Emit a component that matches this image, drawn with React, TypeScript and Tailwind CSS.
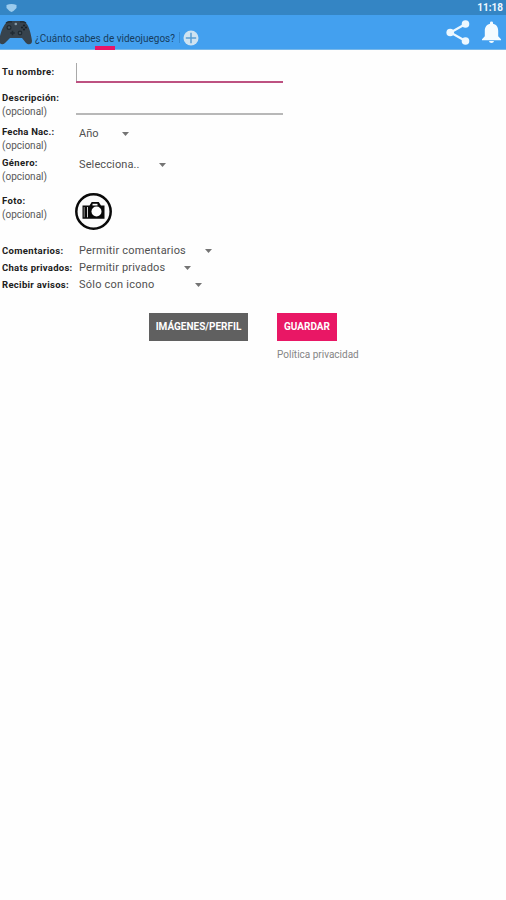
import React from "react";

function Label({ text, optional = false, tracking = "tracking-[0.2px]" }: { text: string; optional?: boolean; tracking?: string }) {
  return (
    <div className="w-[76px] shrink-0 pl-[2px] text-[9.5px] leading-[14px] whitespace-nowrap">
      <div className={`font-bold text-[#202020] ${tracking}`}>{text}</div>
      {optional && <div className="text-[10px] text-[#585858]">(opcional)</div>}
    </div>
  );
}

function Spinner({ text, width, tracking = "" }: { text: string; width: string; tracking?: string }) {
  return (
    <div className={`flex h-[17px] items-center justify-between pl-[3px] text-[11px] leading-[17px] whitespace-nowrap text-[#505050] ${width}`}>
      <span className={tracking}>{text}</span>
      <svg className="h-[4px] w-[7px]" viewBox="0 0 7 4">
        <path d="M0 0h7L3.5 4z" fill="#747474" />
      </svg>
    </div>
  );
}

function Gamepad() {
  return (
    <svg className="h-[26px] w-[33px] shrink-0" viewBox="0 0 33 26">
      <path d="M6 3q2-2 5-2h10q3 0 5 2c3 3 5 11 6 18 0 4-4 4-6 2l-4-5H10l-5 5C3 25 0 25-1 21 0 14 3 6 6 3Z" fill="#37434d" />
      <path d="M6 3q3-2 6-1M20 2q3-1 6 1" fill="none" stroke="#222d35" strokeWidth="1.5" />
      <circle cx="9" cy="7.5" r="2.5" fill="#202b33" />
      <circle cx="9" cy="7.5" r="1.2" fill="#4a5862" />
      <circle cx="20" cy="13" r="2.4" fill="#202b33" />
      <circle cx="20" cy="13" r="1.1" fill="#4a5862" />
      <path d="M12.5 10.7v4.6M10.2 13h4.6" stroke="#202b33" strokeWidth="1.6" />
      <circle cx="15.8" cy="4" r="1.3" fill="#8599a5" />
      <g fill="#182128">
        <circle cx="24" cy="5.5" r="1.1" />
        <circle cx="22" cy="7.5" r="1.1" />
        <circle cx="26" cy="7.5" r="1.1" />
        <circle cx="24" cy="9.5" r="1.1" />
      </g>
    </svg>
  );
}

function CameraButton() {
  return (
    <svg className="h-[38px] w-[38px]" viewBox="0 0 38 38">
      <circle cx="18.5" cy="18.5" r="17.2" fill="#fbfbfb" stroke="#090909" strokeWidth="2.5" />
      <path d="M7.5 12.5h7l2.2-3.5h7l2.3 3.5h3.5v13.3h-22z" fill="#090909" />
      <path d="M17.5 10.8h5v1.7h-5z" fill="#fff" />
      <circle cx="21.5" cy="18.5" r="5" fill="#fff" />
      <path d="M9.2 14v10.3" stroke="#909090" strokeWidth="1" />
      <path d="M12.5 14v10.3" stroke="#d5d5d5" strokeWidth="1" />
    </svg>
  );
}

export default function App() {
  return (
    <div className="flex h-[900px] w-[506px] flex-col overflow-hidden bg-[#fefefe] font-[Roboto,'Liberation_Sans',sans-serif]">
      <div className="flex h-[15px] shrink-0 items-center justify-between bg-[#3485c4] pr-[3px] pl-[6px]">
        <svg className="h-[8px] w-[11px]" viewBox="0 0 11 8">
          <path d="M.5 1Q5.5-1 10.5 1V4Q8 7 5.5 8 3 7 .5 4Z" fill="#9bcbed" />
        </svg>
        <span className="text-[10px] leading-[15px] font-bold text-[#eef8ff]">11:18</span>
      </div>

      <header className="flex h-[35px] shrink-0 border-b border-[#79b8e9] bg-[#43a0ef]">
        <div className="pt-[5px]"><Gamepad /></div>
        <div className="flex w-[142px] flex-col justify-between pl-[2px]">
          <h1 className="pt-[16px] text-[10px] leading-[15px] whitespace-nowrap text-[#173d5e]">¿Cuánto sabes de videojuegos?</h1>
          <div className="ml-[60px] h-[4px] w-[20px] shrink-0 bg-[#e91567]" />
        </div>
        <div className="mt-[17px] ml-[4px] h-[11px] w-px bg-[#3689cf]" />
        <svg className="mt-[15px] ml-[3px] h-[16px] w-[16px]" viewBox="0 0 16 16">
          <circle cx="8" cy="8" r="7.5" fill="#cfe3f1" />
          <path d="M8 2.8v10.4M2.8 8h10.4" stroke="#599fd4" strokeWidth="1.5" />
        </svg>
        <div className="ml-auto flex gap-[12px] pt-[4px] pr-[5px]">
          <svg className="h-[26px] w-[24px]" viewBox="0 0 24 26">
            <path d="M19.5 5 4.5 13.5 19.5 22" fill="none" stroke="#edf8ff" strokeWidth="2.2" />
            <circle cx="19.5" cy="5" r="3.8" fill="#edf8ff" />
            <circle cx="4.2" cy="13.5" r="3.8" fill="#edf8ff" />
            <circle cx="19.5" cy="22" r="3.8" fill="#edf8ff" />
          </svg>
          <svg className="mt-[2px] h-[23px] w-[19px]" viewBox="0 0 19 23">
            <path d="M8 2.7V1.8Q8 .5 9.5.5T11 1.8v.9c4 1 5.2 4 5.2 7v5.5l2.8 3v1H0v-1l2.8-3V9.7c0-3 1.4-6 5.2-7ZM7 20h5q-.3 2-2.5 2T7 20Z" fill="#f4fbff" />
          </svg>
        </div>
      </header>

      <main className="flex flex-col pt-[11px]">
        <div className="flex h-[30px]">
          <div className="pt-[4px]"><Label text="Tu nombre:" tracking="tracking-[0.38px]" /></div>
          <div className="flex h-[22px] w-[207px] items-start border-b-2 border-[#bd5181]">
            <div className="mt-[2px] h-[18px] w-px bg-[#a9a9a9]" />
          </div>
        </div>
        <div className="flex h-[34px]">
          <Label text="Descripción:" optional tracking="tracking-[0.33px]" />
          <div className="h-[24px] w-[207px] border-b-2 border-[#b8b8b8]" />
        </div>
        <div className="flex h-[31px]">
          <Label text="Fecha Nac.:" optional />
          <Spinner text="Año" width="w-[53px]" />
        </div>
        <div className="flex h-[37px]">
          <Label text="Género:" optional tracking="tracking-[0.35px]" />
          <Spinner text="Selecciona.." width="w-[90px]" tracking="tracking-[0.12px]" />
        </div>
        <div className="flex h-[49px]">
          <div className="pt-px"><Label text="Foto:" optional tracking="tracking-[0.4px]" /></div>
          <div className="-ml-px"><CameraButton /></div>
        </div>
        <div className="flex h-[17px] items-center">
          <Label text="Comentarios:" tracking="tracking-[0.34px]" />
          <Spinner text="Permitir comentarios" width="w-[136px]" tracking="tracking-[0.2px]" />
        </div>
        <div className="flex h-[17px] items-center">
          <Label text="Chats privados:" tracking="tracking-[0.27px]" />
          <Spinner text="Permitir privados" width="w-[115px]" tracking="tracking-[0.17px]" />
        </div>
        <div className="flex h-[17px] items-center">
          <Label text="Recibir avisos:" tracking="tracking-[0.3px]" />
          <Spinner text="Sólo con icono" width="w-[126px]" tracking="tracking-[0.22px]" />
        </div>
        <div className="mt-[20px] ml-[149px] flex items-start gap-[28px]">
          <button className="h-[28px] w-[99px] bg-[#606060] text-[10px] leading-[28px] font-bold whitespace-nowrap text-white">IMÁGENES/PERFIL</button>
          <div className="ml-px flex flex-col">
            <button className="h-[28px] w-[60px] bg-[#e91765] text-[10px] leading-[28px] font-bold text-white">GUARDAR</button>
            <a className="mt-[7px] text-[10px] leading-[14px] whitespace-nowrap text-[#858585]">Política privacidad</a>
          </div>
        </div>
      </main>
    </div>
  );
}
